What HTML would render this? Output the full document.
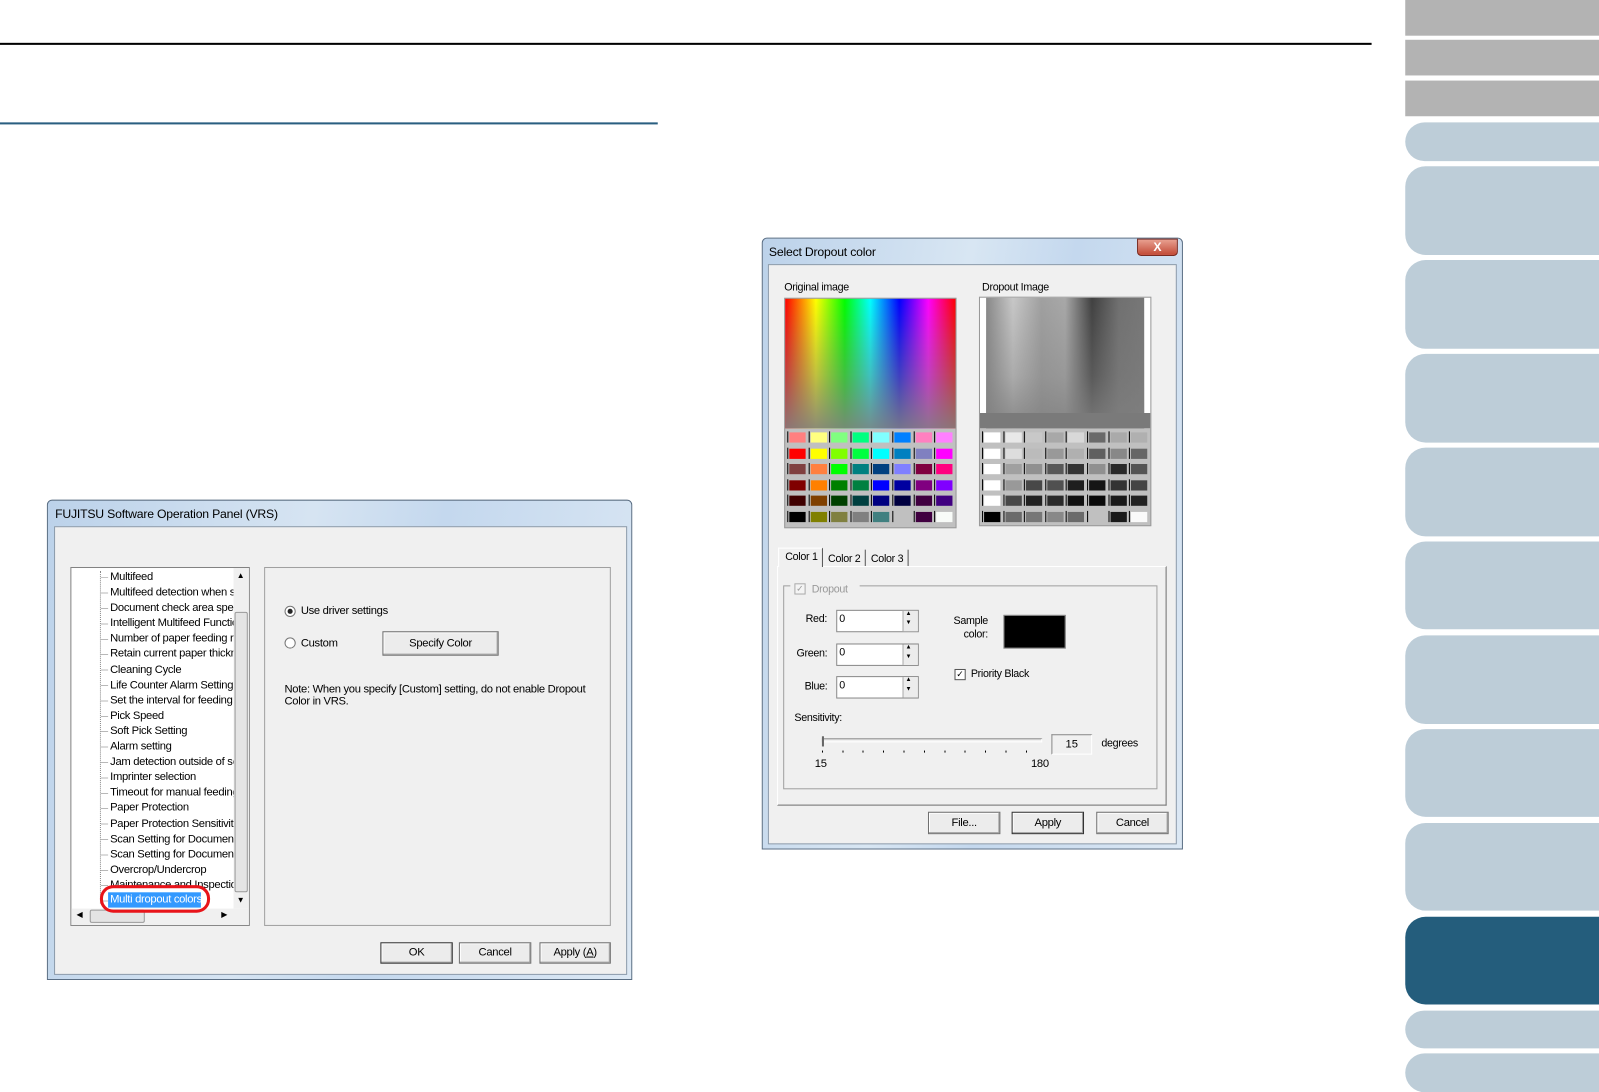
<!DOCTYPE html>
<html><head><meta charset="utf-8"><style>
*{margin:0;padding:0;box-sizing:border-box}
html,body{width:1599px;height:1092px;overflow:hidden;background:#fff}
#w{position:absolute;left:0;top:0;width:1568px;height:1071px;transform:scale(1.01977);transform-origin:0 0;font-family:"Liberation Sans",sans-serif;font-size:11px;color:#000}
.a{position:absolute}
.t{position:absolute;white-space:nowrap;font-size:11px;letter-spacing:-0.3px}
.tab{position:absolute;left:1378px;width:190px;background:#bdcdd8;border-radius:20px 0 0 20px}
.g{position:absolute;left:1378px;width:190px;background:#b3b3b3}
.btn{position:absolute;background:#ececec;border:1px solid #707070;box-shadow:inset -1px -1px 0 #a0a0a0,inset 1px 1px 0 #fff;text-align:center;font-size:11px;letter-spacing:-0.3px}
.grid{position:absolute;display:grid;grid-template-columns:repeat(8,20.6px);grid-auto-rows:15.5px;background:#c0c0c0}
.grid i{display:block;position:relative}
.grid i::before{content:"";position:absolute;left:1px;top:2px;width:1px;height:11px;background:#000}
.grid i b{position:absolute;left:3px;top:3px;width:16px;height:10px;display:block}
</style></head><body><div id="w">
<div class="a" style="left:0;top:42px;width:1345px;height:2px;background:#000"></div>
<div class="a" style="left:0;top:120px;width:645px;height:2px;background:#2a5f80"></div>

<div class="g" style="top:0;height:35px"></div>
<div class="g" style="top:39px;height:35px"></div>
<div class="g" style="top:79px;height:35px"></div>
<div class="tab" style="top:120px;height:38px"></div>
<div class="tab" style="top:163px;height:87px"></div>
<div class="tab" style="top:255px;height:87px"></div>
<div class="tab" style="top:347px;height:87px"></div>
<div class="tab" style="top:439px;height:87px"></div>
<div class="tab" style="top:531px;height:86px"></div>
<div class="tab" style="top:623px;height:87px"></div>
<div class="tab" style="top:715px;height:86px"></div>
<div class="tab" style="top:807px;height:86px"></div>
<div class="tab" style="top:899px;height:86px;background:#245d7c"></div>
<div class="tab" style="top:991px;height:37px"></div>
<div class="tab" style="top:1033px;height:38px"></div>

<!-- Left dialog -->
<div class="a" style="left:46px;top:490px;width:574px;height:471px;background:linear-gradient(100deg,#bcd2ea 0%,#d6e4f2 40%,#c4d8ee 60%,#dce8f4 100%);border:1px solid #5a6e84;border-radius:5px 5px 0 0"></div>
<div class="t" style="left:54px;top:497px;font-size:12px;letter-spacing:-0.2px">FUJITSU Software Operation Panel (VRS)</div>
<div class="a" style="left:53px;top:516px;width:562px;height:440px;background:#f0f0f0;border:1px solid #8a9aab"></div>
<div class="a" style="left:69px;top:556px;width:176px;height:352px;background:#fff;border:1px solid #828282"></div>
<div class="a" style="left:98px;top:560px;width:0;height:326px;border-left:1px dotted #888"></div>
<div class="a" style="left:99px;top:566px;width:7px;height:320px;background:repeating-linear-gradient(to bottom,transparent 0 0px,#999 0px 1px,transparent 1px 15.1px);opacity:.7"></div>
<div class="a" style="left:100px;top:558px;width:129px;height:318px;overflow:hidden">
<div class="t" style="left:8px;top:1px;line-height:15.1px">Multifeed<br>Multifeed detection when s<br>Document check area spe<br>Intelligent Multifeed Functio<br>Number of paper feeding re<br>Retain current paper thickn<br>Cleaning Cycle<br>Life Counter Alarm Setting<br>Set the interval for feeding<br>Pick Speed<br>Soft Pick Setting<br>Alarm setting<br>Jam detection outside of sc<br>Imprinter selection<br>Timeout for manual feeding<br>Paper Protection<br>Paper Protection Sensitivity<br>Scan Setting for Document<br>Scan Setting for Document<br>Overcrop/Undercrop<br>Maintenance and Inspectio</div>
</div>
<div class="a" style="left:229px;top:557px;width:15px;height:334px;background:#f0f0f0"></div>
<div class="a" style="left:230px;top:600px;width:13px;height:275px;background:#e4e4e4;border:1px solid #999;border-radius:2px"></div>
<div class="t" style="left:232px;top:560px;font-size:8px">▲</div>
<div class="t" style="left:232px;top:878px;font-size:8px">▼</div>
<div class="a" style="left:70px;top:891px;width:174px;height:16px;background:#f0f0f0"></div>
<div class="a" style="left:88px;top:892px;width:54px;height:13px;background:#e4e4e4;border:1px solid #999;border-radius:2px"></div>
<div class="t" style="left:75px;top:892px;font-size:8px">◀</div>
<div class="t" style="left:217px;top:892px;font-size:8px">▶</div>
<div class="a" style="left:106px;top:875px;width:91px;height:15px;background:#3399ff"></div>
<div class="t" style="left:108px;top:876px;color:#fff">Multi dropout colors</div>
<div class="a" style="left:98px;top:868px;width:108px;height:27px;border:3px solid #e8141a;border-radius:13px"></div>

<div class="a" style="left:259px;top:556px;width:340px;height:352px;border:1px solid #a0a0a0"></div>
<div class="a" style="left:279px;top:594px;width:11px;height:11px;border:1px solid #777;border-radius:50%;background:#fff"></div>
<div class="a" style="left:282px;top:597px;width:5px;height:5px;border-radius:50%;background:#222"></div>
<div class="t" style="left:295px;top:593px">Use driver settings</div>
<div class="a" style="left:279px;top:625px;width:11px;height:11px;border:1px solid #777;border-radius:50%;background:#fff"></div>
<div class="t" style="left:295px;top:625px">Custom</div>
<div class="btn" style="left:375px;top:619px;width:114px;height:24px;line-height:22px">Specify Color</div>
<div class="t" style="left:279px;top:670px;line-height:12px">Note: When you specify [Custom] setting, do not enable Dropout<br>Color in VRS.</div>
<div class="btn" style="left:373px;top:924px;width:71px;height:21px;line-height:19px;border-color:#333">OK</div>
<div class="btn" style="left:450px;top:924px;width:71px;height:21px;line-height:19px">Cancel</div>
<div class="btn" style="left:529px;top:924px;width:70px;height:21px;line-height:19px">Apply (<u>A</u>)</div>

<!-- Right dialog -->
<div class="a" style="left:747px;top:233px;width:413px;height:600px;background:linear-gradient(100deg,#bcd2ea 0%,#d8e6f3 40%,#c4d8ee 60%,#dce8f4 100%);border:1px solid #5a6e84;border-radius:5px 5px 0 0"></div>
<div class="t" style="left:754px;top:240px;font-size:12px;letter-spacing:-0.2px">Select Dropout color</div>
<div class="a" style="left:1115px;top:234px;width:40px;height:17px;background:linear-gradient(#e8a090,#c24a36);border:1px solid #7a2a20;border-radius:0 0 4px 4px;color:#fff;font-weight:bold;text-align:center;line-height:15px;font-size:12px">X</div>
<div class="a" style="left:753px;top:259px;width:401px;height:569px;background:#f0f0f0;border:1px solid #8a9aab"></div>
<div class="t" style="left:769px;top:276px;font-size:10.5px">Original image</div>
<div class="t" style="left:963px;top:276px;font-size:10.5px">Dropout Image</div>
<div class="a" style="left:769px;top:292px;width:169px;height:226px;background:#c0c0c0;border:1px solid #999"></div>
<div class="a" style="left:770px;top:293px;width:167px;height:127px;background:linear-gradient(to bottom,rgba(128,128,128,0),rgba(128,128,128,0.5) 60%,rgba(128,128,128,0.9)),linear-gradient(to right,#f00,#ff0 18%,#0f0 35%,#0ff 50%,#00f 67%,#f0f 84%,#f00)"></div>
<div class="grid" style="left:771px;top:421px">
<i><b style="background:#ff8080"></b></i><i><b style="background:#ffff80"></b></i><i><b style="background:#80ff80"></b></i><i><b style="background:#00ff80"></b></i><i><b style="background:#80ffff"></b></i><i><b style="background:#0080ff"></b></i><i><b style="background:#ff80c0"></b></i><i><b style="background:#ff80ff"></b></i>
<i><b style="background:#ff0000"></b></i><i><b style="background:#ffff00"></b></i><i><b style="background:#80ff00"></b></i><i><b style="background:#00ff40"></b></i><i><b style="background:#00ffff"></b></i><i><b style="background:#0080c0"></b></i><i><b style="background:#8080c0"></b></i><i><b style="background:#ff00ff"></b></i>
<i><b style="background:#804040"></b></i><i><b style="background:#ff8040"></b></i><i><b style="background:#00ff00"></b></i><i><b style="background:#008080"></b></i><i><b style="background:#004080"></b></i><i><b style="background:#8080ff"></b></i><i><b style="background:#800040"></b></i><i><b style="background:#ff0080"></b></i>
<i><b style="background:#800000"></b></i><i><b style="background:#ff8000"></b></i><i><b style="background:#008000"></b></i><i><b style="background:#008040"></b></i><i><b style="background:#0000ff"></b></i><i><b style="background:#0000a0"></b></i><i><b style="background:#800080"></b></i><i><b style="background:#8000ff"></b></i>
<i><b style="background:#400000"></b></i><i><b style="background:#804000"></b></i><i><b style="background:#004000"></b></i><i><b style="background:#004040"></b></i><i><b style="background:#000080"></b></i><i><b style="background:#000040"></b></i><i><b style="background:#400040"></b></i><i><b style="background:#400080"></b></i>
<i><b style="background:#000"></b></i><i><b style="background:#808000"></b></i><i><b style="background:#808040"></b></i><i><b style="background:#808080"></b></i><i><b style="background:#408080"></b></i><i><b style="background:#c0c0c0"></b></i><i><b style="background:#400040"></b></i><i><b style="background:#f8fbf8"></b></i>
</div>

<div class="a" style="left:960px;top:291px;width:169px;height:225px;background:#c0c0c0;border:1px solid #999"></div>
<div class="a" style="left:961px;top:292px;width:167px;height:128px;background:#fff"></div>
<div class="a" style="left:967px;top:292px;width:155px;height:128px;background:linear-gradient(to bottom,rgba(128,128,128,0),rgba(128,128,128,0.4) 60%,rgba(128,128,128,0.9)),linear-gradient(to right,#888,#c8c8c8 17%,#a0a0a0 35%,#a8a8a8 50%,#404040 67%,#707070 84%,#777)"></div>
<div class="a" style="left:961px;top:405px;width:167px;height:15px;background:#7a7a7a"></div>
<div class="grid" style="left:962px;top:421px">
<i><b style="background:#fff"></b></i><i><b style="background:#e8e8e8"></b></i><i><b style="background:#c8c8c8"></b></i><i><b style="background:#a8a8a8"></b></i><i><b style="background:#d8d8d8"></b></i><i><b style="background:#6a6a6a"></b></i><i><b style="background:#aaa"></b></i><i><b style="background:#b0b0b0"></b></i>
<i><b style="background:#fff"></b></i><i><b style="background:#ddd"></b></i><i><b style="background:#bbb"></b></i><i><b style="background:#999"></b></i><i><b style="background:#b0b0b0"></b></i><i><b style="background:#606060"></b></i><i><b style="background:#888"></b></i><i><b style="background:#666"></b></i>
<i><b style="background:#fff"></b></i><i><b style="background:#a0a0a0"></b></i><i><b style="background:#909090"></b></i><i><b style="background:#585858"></b></i><i><b style="background:#333"></b></i><i><b style="background:#909090"></b></i><i><b style="background:#2a2a2a"></b></i><i><b style="background:#555"></b></i>
<i><b style="background:#fff"></b></i><i><b style="background:#999"></b></i><i><b style="background:#484848"></b></i><i><b style="background:#505050"></b></i><i><b style="background:#1e1e1e"></b></i><i><b style="background:#151515"></b></i><i><b style="background:#333"></b></i><i><b style="background:#444"></b></i>
<i><b style="background:#fff"></b></i><i><b style="background:#484848"></b></i><i><b style="background:#222"></b></i><i><b style="background:#2a2a2a"></b></i><i><b style="background:#111"></b></i><i><b style="background:#0a0a0a"></b></i><i><b style="background:#1a1a1a"></b></i><i><b style="background:#222"></b></i>
<i><b style="background:#000"></b></i><i><b style="background:#6a6a6a"></b></i><i><b style="background:#777"></b></i><i><b style="background:#888"></b></i><i><b style="background:#6a6a6a"></b></i><i><b style="background:#c0c0c0"></b></i><i><b style="background:#1a1a1a"></b></i><i><b style="background:#fafafa"></b></i>
</div>

<!-- tabs -->
<div class="a" style="left:762px;top:555px;width:382px;height:235px;border:1px solid #fff;border-right-color:#707070;border-bottom-color:#707070"></div>
<div class="a" style="left:763px;top:537px;width:44px;height:19px;background:#f0f0f0;border:1px solid #fff;border-bottom:none;border-right:1px solid #555"></div>
<div class="t" style="left:770px;top:540px;font-size:10.5px">Color 1</div>
<div class="a" style="left:807px;top:539px;width:42px;height:16px;border-right:1px solid #555"></div>
<div class="t" style="left:812px;top:542px;font-size:10.5px">Color 2</div>
<div class="a" style="left:849px;top:539px;width:42px;height:16px;border-right:1px solid #555"></div>
<div class="t" style="left:854px;top:542px;font-size:10.5px">Color 3</div>
<div class="a" style="left:768px;top:574px;width:367px;height:200px;border:1px solid #a0a0a0"></div>
<div class="a" style="left:775px;top:570px;width:68px;height:12px;background:#f0f0f0"></div>
<div class="a" style="left:779px;top:572px;width:11px;height:11px;border:1px solid #aaa;background:#f4f4f4;color:#999;font-size:9px;line-height:9px;text-align:center">✓</div>
<div class="t" style="left:796px;top:572px;color:#999;font-size:10.5px">Dropout</div>
<div class="t" style="left:790px;top:601px;font-size:10.5px">Red:</div>
<div class="t" style="left:781px;top:635px;font-size:10.5px">Green:</div>
<div class="t" style="left:789px;top:667px;font-size:10.5px">Blue:</div>
<div class="a" style="left:820px;top:598px;width:81px;height:22px;border:1px solid #888;background:#fff"></div>
<div class="a" style="left:820px;top:631px;width:81px;height:22px;border:1px solid #888;background:#fff"></div>
<div class="a" style="left:820px;top:663px;width:81px;height:22px;border:1px solid #888;background:#fff"></div>
<div class="a" style="left:885px;top:599px;width:15px;height:20px;background:#ececec;border-left:1px solid #aaa"></div>
<div class="a" style="left:885px;top:632px;width:15px;height:20px;background:#ececec;border-left:1px solid #aaa"></div>
<div class="a" style="left:885px;top:664px;width:15px;height:20px;background:#ececec;border-left:1px solid #aaa"></div>
<div class="t" style="left:888px;top:598px;font-size:6px;line-height:9px">▲<br>▼</div>
<div class="t" style="left:888px;top:631px;font-size:6px;line-height:9px">▲<br>▼</div>
<div class="t" style="left:888px;top:663px;font-size:6px;line-height:9px">▲<br>▼</div>
<div class="t" style="left:823px;top:601px;font-size:10.5px">0</div>
<div class="t" style="left:823px;top:634px;font-size:10.5px">0</div>
<div class="t" style="left:823px;top:666px;font-size:10.5px">0</div>
<div class="t" style="left:935px;top:603px;font-size:10.5px;line-height:13px;text-align:right">Sample<br>&nbsp;&nbsp;&nbsp;color:</div>
<div class="a" style="left:984px;top:603px;width:61px;height:33px;background:#000;border:1px solid #888"></div>
<div class="a" style="left:936px;top:656px;width:11px;height:11px;border:1px solid #555;background:#fff;font-size:9px;line-height:9px;text-align:center">✓</div>
<div class="t" style="left:952px;top:655px;font-size:10.5px">Priority Black</div>
<div class="t" style="left:779px;top:698px;font-size:10.5px">Sensitivity:</div>
<div class="a" style="left:806px;top:724px;width:216px;height:4px;border:1px solid #888;border-right-color:#fff;border-bottom-color:#fff"></div>
<div class="a" style="left:806px;top:722px;width:2px;height:10px;background:#666"></div>
<div class="a" style="left:806px;top:736px;width:216px;height:2px;background:repeating-linear-gradient(to right,#000 0 1px,transparent 1px 20px)"></div>
<div class="t" style="left:799px;top:743px;font-size:11px">15</div>
<div class="t" style="left:1011px;top:743px;font-size:11px">180</div>
<div class="a" style="left:1031px;top:720px;width:40px;height:20px;border:1px solid #888;border-right-color:#fff;border-bottom-color:#fff;text-align:center;line-height:18px;font-size:11px">15</div>
<div class="t" style="left:1080px;top:723px;font-size:10.5px">degrees</div>
<div class="btn" style="left:910px;top:796px;width:71px;height:22px;line-height:20px">File...</div>
<div class="btn" style="left:992px;top:796px;width:71px;height:22px;line-height:20px;border-color:#333">Apply</div>
<div class="btn" style="left:1075px;top:796px;width:71px;height:22px;line-height:20px">Cancel</div>
</div></body></html>
